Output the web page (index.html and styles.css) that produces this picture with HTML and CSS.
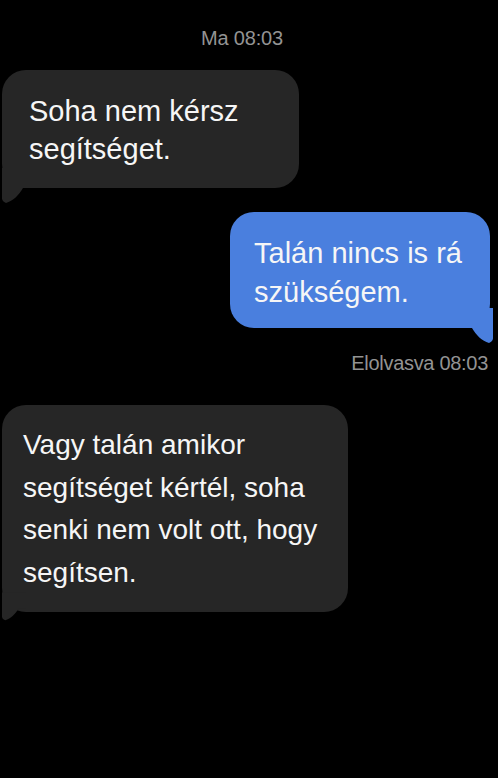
FILE: index.html
```html
<!DOCTYPE html>
<html lang="hu">
<head>
<meta charset="utf-8">
<title>Üzenetek</title>
<link rel="stylesheet" href="styles.css">
</head>
<body>
<div class="chat">
  <div class="stamp">Ma 08:03</div>

  <div class="bubble in first">
    Soha nem kérsz<br>segítséget.
    <svg class="tail tail-left" width="30" height="36" viewBox="0 0 30 36"><path d="M0 0 L0 26 C0 30 -1 33 4 35 C11 33 17 27 21 20 L30 20 L30 0 Z" fill="#262626"/></svg>
  </div>

  <div class="bubble out">
    Talán nincs is rá<br>szükségem.
    <svg class="tail tail-right" width="30" height="36" viewBox="0 0 30 36"><path d="M0 0 L0 26 C0 30 -1 33 4 35 C11 33 17 27 21 20 L30 20 L30 0 Z" fill="#4a7fde"/></svg>
  </div>

  <div class="read">Elolvasva 08:03</div>

  <div class="bubble in third">
    Vagy talán amikor<br>segítséget kértél, soha<br>senki nem volt ott, hogy<br>segítsen.
    <svg class="tail tail-left small" width="30" height="36" viewBox="0 0 30 36"><path d="M0 0 L0 26 C0 30 -1 33 4 35 C11 33 17 27 21 20 L30 20 L30 0 Z" fill="#262626"/></svg>
  </div>
</div>
</body>
</html>
```

FILE: styles.css
```css
html, body {
  margin: 0;
  padding: 0;
  background: #000;
}

body {
  width: 498px;
  height: 778px;
  overflow: hidden;
  font-family: "Liberation Sans", Arial, sans-serif;
  color: #f6f6f6;
}

.chat {
  display: flex;
  flex-direction: column;
  padding-top: 26px;
}

.stamp {
  align-self: center;
  font-size: 20px;
  line-height: 24px;
  color: #939393;
  letter-spacing: -0.2px;
  margin-left: -14px;
}

.bubble {
  position: relative;
  box-sizing: border-box;
  border-radius: 24px;
  font-size: 29px;
}

.in {
  align-self: flex-start;
  background: #262626;
  margin-left: 2px;
}

.first {
  margin-top: 20px;
  width: 297px;
  padding: 22px 0 20px 27px;
  line-height: 38px;
}

.out {
  align-self: flex-end;
  background: #4a7fde;
  margin-top: 24px;
  margin-right: 8px;
  width: 260px;
  padding: 22px 0 16px 24px;
  line-height: 39px;
}

.read {
  align-self: flex-end;
  margin-top: 23px;
  margin-right: 10px;
  font-size: 20px;
  line-height: 24px;
  color: #939393;
  letter-spacing: -0.3px;
}

.third {
  margin-top: 30px;
  width: 346px;
  padding: 19px 0 18px 21px;
  font-size: 28px;
  line-height: 42.5px;
}

.tail {
  position: absolute;
  bottom: -16px;
  display: block;
}

.tail-left {
  left: 0;
}

.tail-right {
  right: -3px;
  transform: scaleX(-1);
}

.tail-left.small {
  bottom: -9px;
  transform: scale(0.8);
  transform-origin: left bottom;
}
```
